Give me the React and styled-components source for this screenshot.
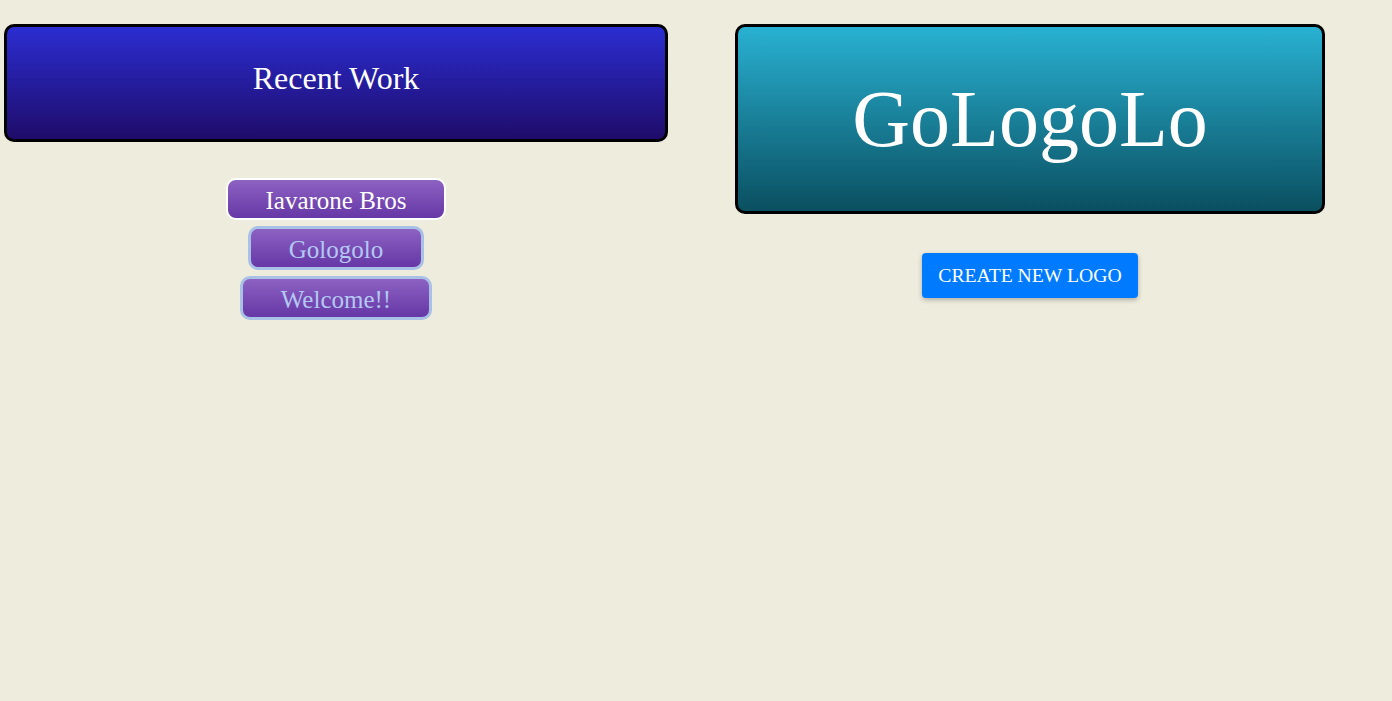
import React from 'react';
import styled, { createGlobalStyle } from 'styled-components';

const GlobalStyle = createGlobalStyle`
  html, body {
    margin: 0;
    padding: 0;
    background-color: #edecdd;
    font-family: "Liberation Serif", "Times New Roman", serif;
  }
`;

// Layout
const Page = styled.div`
  display: flex;
  align-items: flex-start;
  gap: 67px;
  padding: 24px 0 0 4px;
  min-height: 677px;
`;

const Column = styled.div`
  display: flex;
  flex-direction: column;
  align-items: center;
  width: ${({ width }) => width}px;
`;

// Banners
const Banner = styled.div`
  box-sizing: border-box;
  width: 100%;
  height: ${({ height }) => height}px;
  border: 3px solid #000;
  border-radius: 10px;
  background: ${({ from, to }) => `linear-gradient(to bottom, ${from}, ${to})`};
  color: #fff;
  display: flex;
  justify-content: center;
  align-items: ${({ align }) => align || 'center'};
  padding-top: ${({ pad }) => pad || 0}px;
  font-size: ${({ size }) => size}px;
  line-height: 1;
`;

// Recent work list
const WorkList = styled.div`
  display: flex;
  flex-direction: column;
  align-items: center;
  gap: 6px;
  margin-top: 36px;
`;

const WorkButton = styled.button`
  box-sizing: border-box;
  font-family: inherit;
  font-size: 25px;
  line-height: 34px;
  padding: 4px 38px 0;
  border-radius: 10px;
  border: ${({ active }) => (active ? '2px solid #fff' : '3px solid #a9c1e6')};
  color: ${({ active }) => (active ? '#fff' : '#b3c8f2')};
  background: linear-gradient(to bottom, #8c62c2, #6637a6);
  cursor: pointer;
`;

const CreateButton = styled.button`
  margin-top: 39px;
  font-family: inherit;
  font-size: 19.7px;
  text-transform: uppercase;
  color: #fff;
  background-color: #007bff;
  border: none;
  border-radius: 4px;
  padding: 10px 16px;
  line-height: 25px;
  box-shadow: 0 2px 5px rgba(0, 0, 0, 0.26);
  cursor: pointer;
`;

const works = ['Iavarone Bros', 'Gologolo', 'Welcome!!'];

const App = () => (
  <>
    <GlobalStyle />
    <Page>
      <Column width={664}>
        <Banner height={118} from="#2b2dd1" to="#1f0c6a" size={32} align="flex-start" pad={35}>
          Recent Work
        </Banner>
        <WorkList>
          {works.map((w, i) => (
            <WorkButton key={w} active={i === 0}>{w}</WorkButton>
          ))}
        </WorkList>
      </Column>
      <Column width={590}>
        <Banner height={190} from="#29b1d2" to="#0a4f60" size={80}>
          GoLogoLo
        </Banner>
        <CreateButton>Create New Logo</CreateButton>
      </Column>
    </Page>
  </>
);

export default App;
